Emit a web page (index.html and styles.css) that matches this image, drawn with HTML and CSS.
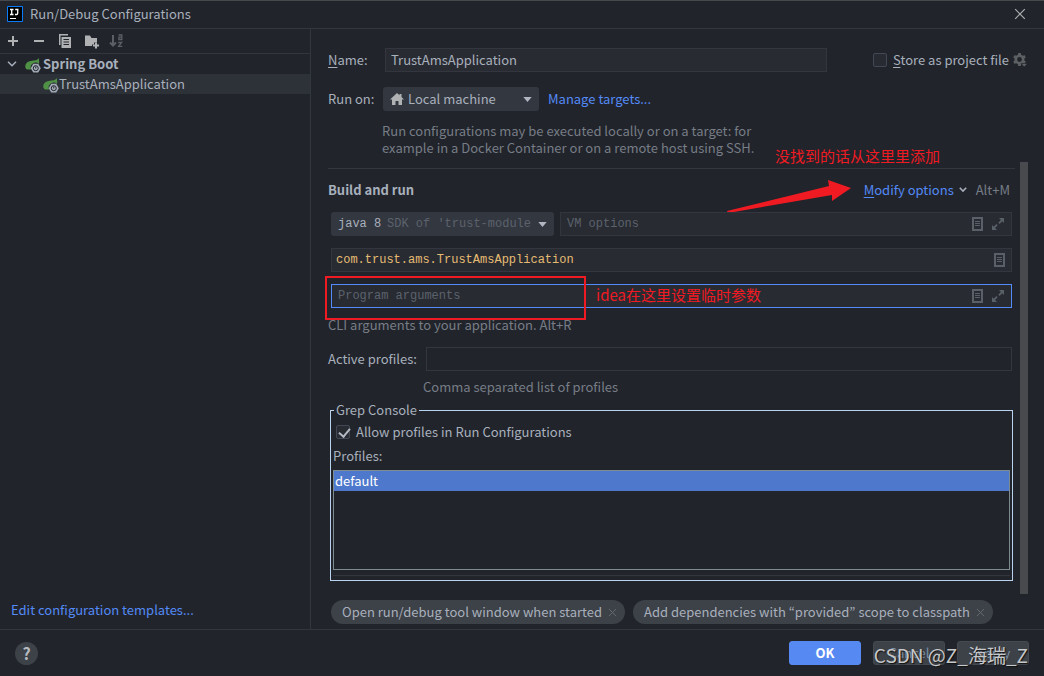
FILE: index.html
```html
<!DOCTYPE html>
<html lang="en">
<head>
<meta charset="utf-8">
<title>Run/Debug Configurations</title>
<link rel="stylesheet" href="styles.css">
</head>
<body>
<svg class="defs" aria-hidden="true">
  <symbol id="leaf" viewBox="0 0 16 16">
    <path fill="#4f9145" d="M13.500 1c-.5 1.200-1.500 1.900-3 2.200C9 3.500 5 3.400 2.700 5 .6 6.500 0 8.600.4 10.400.7 11.500 1.400 12 2.300 12.500H6a5 5 0 0 1 8-5.500C14.300 5.500 14.300 3 13.500 1z"/>
    <path fill="#a4acb8" d="M8.300 6.800h4.900l2.600 4.400-2.600 4.400H8.300L5.700 11.200z"/>
    <circle cx="10.750" cy="11.200" r="2.500" fill="none" stroke="#21242b" stroke-width="1"/>
    <path stroke="#21242b" stroke-width="1" d="M10.750 9.500v2"/>
  </symbol>
  <symbol id="doc" viewBox="0 0 12 14">
    <path fill="none" stroke="currentColor" stroke-width="2" d="M1 1h9v12H1z"/>
    <path stroke="currentColor" d="M3 4.500h5M3 6.500h5M3 8.500h5"/>
  </symbol>
  <symbol id="expand" viewBox="0 0 12 12">
    <path fill="currentColor" d="M7 0h5v5L10.300 3.300 7.500 6 6.300 4.800 8.900 2zM0 7l1.700 1.700L4.500 6l1.200 1.200L3 10l2 2H0z"/>
  </symbol>
  <symbol id="cross" viewBox="0 0 10 10">
    <path fill="none" stroke="currentColor" d="M1 1l8 8M9 1L1 9"/>
  </symbol>
</svg>

<header class="titlebar">
  <svg class="app-logo" viewBox="0 0 16 16"><path fill="#000" stroke="#087cfa" d="M.5.5h15v15H.5z"/><path fill="none" stroke="#fff" stroke-width="1.300" d="M3 3.500h3.500M4.700 3.500v5M3 8.500h3.500M8.200 3.500h3.300M10.700 3.500v3.700q0 1.300-1.200 1.300H8"/><path stroke="#fff" d="M3 12.500h6"/></svg>
  <h1>Run/Debug Configurations</h1>
  <button class="icon-btn close" aria-label="Close"><svg width="12" height="12"><use href="#cross"/></svg></button>
</header>

<div class="workspace">
  <aside class="sidebar">
    <div class="toolbar">
      <button class="icon-btn" aria-label="Add"><svg width="16" height="16"><path stroke="currentColor" stroke-width="2" d="M3 8h10M8 3v10"/></svg></button>
      <button class="icon-btn" aria-label="Remove"><svg width="16" height="16"><path stroke="currentColor" stroke-width="2" d="M3 8h10"/></svg></button>
      <button class="icon-btn" aria-label="Copy"><svg width="16" height="16"><path fill="currentColor" d="M2 1h9v1.500H3.500V12H2z"/><path fill="currentColor" fill-rule="evenodd" d="M4.500 4H14v11H4.500zM6.500 6v1h5.500V6zM6.500 8.500v1h5.500v-1zM6.500 11v1h5.500v-1z"/></svg></button>
      <button class="icon-btn" aria-label="New folder"><svg width="16" height="16"><path fill="currentColor" d="M2 2.500h5L8.500 5H14v4.500h-3v2H9V13H2z"/><path stroke="currentColor" stroke-width="2" d="M10 12.500h6M13 9.500v6"/></svg></button>
      <button class="icon-btn" aria-label="Sort configurations" disabled><svg width="16" height="16"><path fill="none" stroke="currentColor" stroke-width="2" d="M4 2v11M1 9.500l3 3 3-3"/><path fill="none" stroke="currentColor" stroke-width="1.300" d="M9.500 2h3.300v4.500h-2.900v-2.300h2.900M9.200 9.500h3.400L9.600 13.300h3.700"/></svg></button>
    </div>
    <ul class="tree">
      <li class="tree-row group"><svg class="chevron" viewBox="0 0 10 6"><path fill="none" stroke="currentColor" stroke-width="1.500" d="M1 .8l4 4 4-4"/></svg><svg class="leaf"><use href="#leaf"/></svg>Spring Boot</li>
      <li class="tree-row child selected"><svg class="leaf"><use href="#leaf"/></svg>TrustAmsApplication</li>
    </ul>
    <a class="link templates" href="#">Edit configuration templates...</a>
  </aside>

  <main class="editor">
    <div class="row name-row">
      <label class="caption" for="name"><u>N</u>ame:</label>
      <input class="field name-field" id="name" type="text" value="TrustAmsApplication">
      <span class="store">
        <input class="check" type="checkbox" id="store"><label for="store"><u>S</u>tore as project file</label>
        <svg class="gear" viewBox="0 0 16 16"><circle cx="7.500" cy="7.500" r="3.700" fill="none" stroke="currentColor" stroke-width="2.600"/><path stroke="currentColor" stroke-width="2.800" d="M7.500 1v2M7.500 12v2M1.900 4.250l1.700 1M11.400 9.750l1.700 1M1.900 10.750l1.700-1M11.400 5.250l1.700-1"/><path fill="currentColor" stroke="#21242b" stroke-width=".6" d="M9 11.500h6.500L12.250 15z"/></svg>
      </span>
    </div>
    <div class="row target-row">
      <label class="caption" for="target">Run on:</label>
      <span class="picker target">
        <svg class="home" viewBox="0 0 14 12"><path fill="currentColor" d="M7 0L0 6.500h2V12h3.500V8h3v4H12V6.500h2L11.500 4V1h-2v1.300z"/></svg>
        <select id="target"><option>Local machine</option></select>
        <svg class="arrow" viewBox="0 0 10 6"><path fill="currentColor" d="M0 0h10L5 6z"/></svg>
      </span>
      <a class="link" href="#">Manage targets...</a>
    </div>
    <p class="hint target-hint">Run configurations may be executed locally or on a target: for example in a Docker Container or on a remote host using SSH.</p>

    <div class="scroll-area">
      <div class="settings">
        <div class="section-head">
          <h2>Build and run</h2>
          <div class="note-add" lang="zh-CN">
            <span>没找到的话从这里里添加</span>
            <svg viewBox="0 0 124 34"><path fill="#f01a22" d="M0 32L102 7l-1-6 23 8-19 13 0-6L1 34z"/></svg>
          </div>
          <a class="link" href="#"><u>M</u>odify options</a>
          <svg class="mini-chevron" viewBox="0 0 8 6"><path fill="none" stroke="currentColor" stroke-width="1.600" d="M.8.800L4 4 7.200.800"/></svg>
          <span class="hint">Alt+M</span>
        </div>
        <div class="fields">
          <div class="run-row">
            <span class="picker sdk">
              <select aria-label="Java version"><option>java 8</option></select>
              <span class="sdk-note">SDK of 'trust-modules</span>
              <svg class="arrow" viewBox="0 0 10 6"><path fill="currentColor" d="M0 0h10L5 6z"/></svg>
            </span>
            <div class="box"><input type="text" placeholder="VM options" aria-label="VM options"><svg class="doc"><use href="#doc"/></svg><svg class="expand"><use href="#expand"/></svg></div>
          </div>
          <div class="box main-class"><input type="text" value="com.trust.ams.TrustAmsApplication" aria-label="Main class"><svg class="doc"><use href="#doc"/></svg></div>
          <div class="box focused">
            <input type="text" placeholder="Program arguments" aria-label="Program arguments"><svg class="doc"><use href="#doc"/></svg><svg class="expand"><use href="#expand"/></svg>
            <span class="note-frame"></span>
            <span class="note-args" lang="zh-CN">idea在这里设置临时参数</span>
          </div>
        </div>
        <p class="hint args-hint">CLI arguments to your application. Alt+R</p>
        <div class="profiles-row">
          <label for="active">Active profiles:</label>
          <input class="field plain" id="active" type="text">
          <p class="hint">Comma separated list of profiles</p>
        </div>
        <fieldset class="grep">
          <legend>Grep Console</legend>
          <div class="allow"><input class="check" type="checkbox" id="allow" checked><label for="allow">Allow profiles in Run Configurations</label></div>
          <div class="list-label">Profiles:</div>
          <ul class="profile-list"><li>default</li></ul>
          <div class="list-rule"></div>
        </fieldset>
      </div>
      <div class="scrollbar"></div>
    </div>

    <div class="chips">
      <span class="chip">Open run/debug tool window when started<button class="icon-btn" aria-label="Remove option"><svg width="9" height="9"><use href="#cross"/></svg></button></span>
      <span class="chip">Add dependencies with “provided” scope to classpath<button class="icon-btn" aria-label="Remove option"><svg width="9" height="9"><use href="#cross"/></svg></button></span>
    </div>
  </main>
</div>

<footer class="footer">
  <button class="help" aria-label="Help">?</button>
  <button class="btn primary">OK</button>
  <button class="btn">Cancel</button>
  <button class="btn">Apply</button>
  <span class="watermark" lang="zh-CN">CSDN @Z_海瑞_Z</span>
</footer>
</body>
</html>
```
FILE: styles.css
```css
* { box-sizing: border-box; }

body {
  margin: 0;
  min-height: 100vh;
  display: flex;
  flex-direction: column;
  background: #21242b;
  border-top: 1px solid #45494b;
  color: #a8b0bc;
  font: 13px/18px "Noto Sans CJK KR", "Noto Sans", sans-serif;
}

h1, h2, p, ul { margin: 0; padding: 0; font-size: 13px; list-style: none; }
h1 { font-weight: 400; }
input, select, button { font: inherit; color: inherit; margin: 0; }
input, select { outline: 0; }
svg { flex: none; display: block; }
u { text-underline-offset: 2px; }
.defs { position: absolute; width: 0; height: 0; }
.link { color: #548af7; text-decoration: none; }
.hint { color: #777d86; }
.icon-btn { display: flex; padding: 0; border: 0; background: none; color: #afb1b3; }
.icon-btn:disabled { color: #5c5f63; }

.titlebar {
  display: flex;
  align-items: center;
  gap: 7px;
  height: 28px;
  padding: 0 18px 2px 7px;
  border-bottom: 1px solid #33363f;
}
.app-logo { width: 16px; height: 16px; }
.close { margin-left: auto; }

.workspace { flex: 1; display: flex; }
.sidebar {
  width: 311px;
  flex: none;
  display: flex;
  flex-direction: column;
  border-right: 1px solid #33363f;
}
.toolbar {
  display: flex;
  align-items: center;
  gap: 10px;
  height: 25px;
  padding-left: 5px;
  border-bottom: 1px solid #33363f;
}
.tree-row { display: flex; align-items: center; height: 20px; padding-bottom: 1px; }
.tree-row.group { padding-left: 7px; font-weight: 700; }
.tree-row.child { padding-left: 43px; }
.tree-row.selected { background: #2d3138; }
.chevron { width: 10px; height: 6px; margin-right: 8px; }
.leaf { width: 16px; height: 16px; margin-top: 2px; }
.group .leaf { margin-right: 2px; }
.templates { margin: auto 11px 10px; }

.editor {
  flex: 1;
  min-width: 0;
  display: flex;
  flex-direction: column;
  padding: 19px 16px 5px 17px;
}
.row { display: flex; align-items: center; }
.caption { width: 57px; }
.field {
  height: 24px;
  padding: 0 5px 2px;
  border: 1px solid #33363f;
  background: #282b32;
}
.name-field { flex: 1; min-width: 0; }
.store { display: flex; align-items: center; margin-left: 46px; }
.check {
  appearance: none;
  width: 14px;
  height: 14px;
  margin-right: 6px;
  border: 1px solid #424853;
  border-radius: 2px;
  background: #282b32;
}
.check:checked::before {
  content: "";
  display: block;
  width: 5px;
  height: 9px;
  margin: 0 0 0 4px;
  border: solid #b4bac4;
  border-width: 0 2px 2px 0;
  transform: rotate(40deg);
}
.gear { width: 16px; height: 16px; margin-left: 3px; color: #5e6164; }

.target-row { margin-top: 15px; }
.target-row .caption { width: 55px; }
.picker { position: relative; display: flex; height: 24px; }
.picker select {
  appearance: none;
  width: 100%;
  border: 0;
  border-radius: 3px;
  background: #333740;
}
.target { width: 156px; margin-right: 9px; }
.target select { padding: 0 24px 1px 25px; }
.home { position: absolute; left: 7px; top: 6px; width: 14px; height: 12px; color: #afb1b3; }
.arrow { position: absolute; right: 7px; top: 10px; width: 9px; height: 5px; color: #b0b7c2; }
.target-hint { width: 390px; margin: 11px 0 0 54px; line-height: 17px; }

.scroll-area { flex: 1; display: flex; margin: 6px 0; }
.settings { flex: 1; min-width: 0; padding-top: 6px; }
.scrollbar { width: 8px; margin-left: 5px; background: #484a4d; }
.section-head {
  position: relative;
  display: flex;
  align-items: center;
  padding: 12px 5px 13px 0;
  border-top: 1px solid #33363f;
}
.section-head h2 { margin-right: auto; }
.mini-chevron { width: 8px; height: 6px; margin: 0 9px 0 5px; }
.note-add { position: absolute; right: 75px; top: -24px; color: #f01a22; font-family: "Noto Sans CJK SC", sans-serif; font-size: 15px; line-height: 22px; }
.note-add svg { position: absolute; right: 89px; top: 34px; width: 124px; height: 34px; }

.fields {
  display: grid;
  gap: 12px;
  margin: 0 3px;
  font-family: "Liberation Mono", "DejaVu Sans Mono", monospace;
  font-size: 12px;
}
.run-row { display: flex; gap: 6px; }
.sdk { width: 223px; flex: none; }
.sdk select { padding: 0 24px 0 7px; }
.sdk-note { position: absolute; left: 56px; right: 22px; top: 3px; overflow: hidden; white-space: nowrap; color: #5c626c; }
.box {
  position: relative;
  flex: 1;
  display: flex;
  align-items: center;
  height: 24px;
  padding: 0 7px 0 6px;
  border: 1px solid #33363f;
  background: #282b32;
}
.box input { flex: 1; min-width: 0; padding: 0; border: 0; background: none; }
.box input::placeholder { color: #5c626c; opacity: 1; }
.doc { width: 12px; height: 14px; color: #5a6068; }
.expand { width: 12px; height: 12px; margin-left: 8px; color: #5a6068; }
.main-class { padding: 0 5px 0 4px; color: #e6bc72; }
.focused { border-color: #548af7; }
.note-frame { position: absolute; left: -7px; top: -9px; width: 261px; height: 44px; border: 2px solid #f01a22; }
.note-args { position: absolute; left: 264px; top: -1px; color: #f01a22; font: 15px/22px "Noto Sans CJK SC", sans-serif; }
.args-hint { margin-top: 8px; }

.profiles-row {
  display: grid;
  grid-template-columns: 98px 1fr;
  align-items: center;
  row-gap: 7px;
  margin: 13px 3px 0 0;
}
.plain { background: none; }
.profiles-row .hint { grid-column: 2; margin-left: -3px; }

.grep {
  min-width: 0;
  margin: 5px 2px 0;
  padding: 4px 2px;
  border: 1px solid #b9d3ee;
}
.grep legend { margin-left: 1px; padding: 0 2px; }
.allow { display: flex; align-items: center; padding-left: 3px; }
.list-label { margin: 6px 0 5px; }
.profile-list { height: 100px; border: 1px solid #7d8c90; }
.profile-list li { padding: 1px 1px; background: #4d78cc; color: #fff; }
.list-rule { margin-top: 5px; border-top: 1px solid #33363f; }

.chips { display: flex; gap: 8px; margin-left: 3px; }
.chip {
  display: flex;
  align-items: center;
  gap: 6px;
  height: 24px;
  padding: 0 8px 0 11px;
  border-radius: 12px;
  background: #3d4148;
  white-space: nowrap;
}
.chip .icon-btn { color: #676c75; }

.footer {
  position: relative;
  display: flex;
  align-items: center;
  gap: 12px;
  height: 47px;
  padding: 0 15px;
  border-top: 1px solid #33363f;
}
.help {
  width: 23px;
  height: 23px;
  margin-right: auto;
  padding: 0;
  border: 0;
  border-radius: 50%;
  background: #3d4148;
  color: #b4b8bf;
  font-size: 16px;
  font-weight: 700;
}
.btn {
  width: 72px;
  height: 24px;
  padding: 0;
  border: 1px solid #454951;
  border-radius: 3px;
  background: #3d4148;
  color: #7790a8;
}
.btn.primary { border-color: #568af2; background: #568af2; color: #fff; font-weight: 700; }
.watermark {
  position: absolute;
  right: 16px;
  top: 12px;
  color: #c6c8ca;
  font-family: "Noto Sans CJK SC", sans-serif;
  font-size: 19px;
  line-height: 26px;
  text-shadow: 1px 1px 1px #111;
}
```
